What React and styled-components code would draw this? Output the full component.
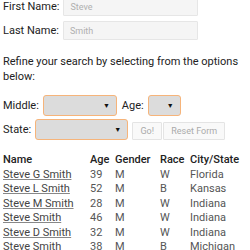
import React from 'react';
import styled, { createGlobalStyle } from 'styled-components';

const GlobalStyle = createGlobalStyle`
  html, body {
    margin: 0;
    padding: 0;
    background: #fff;
  }
  body {
    font-family: Roboto, "Liberation Sans", sans-serif;
    color: #222;
    overflow: hidden;
  }
`;

const Page = styled.div`
  padding: 0 3px;
  margin-top: -3px;
`;

const NameRow = styled.div`
  display: flex;
  align-items: center;
  gap: 4px;
  margin-bottom: 5px;
  font-size: 11px;
`;

const TextInput = styled.input`
  box-sizing: border-box;
  width: 135px;
  height: 19px;
  padding: 0 6px;
  border: 1px solid #e6e6e6;
  border-radius: 1px;
  background: #f5f5f5;
  font-family: Roboto, "Liberation Sans", sans-serif;
  font-size: 9px;
  outline: none;

  &::placeholder {
    color: #b0b0b0;
  }
`;

const Intro = styled.p`
  margin: 14px 0 11px;
  font-size: 11px;
  line-height: 15px;
`;

const FilterRow = styled.div`
  display: flex;
  align-items: center;
  gap: 4px;
  margin-bottom: 3px;
  font-size: 11px;
`;

const SelectBox = styled.div`
  box-sizing: border-box;
  width: ${p => p.$width}px;
  height: 21px;
  border: 1px solid #f6b47a;
  border-radius: 3px;
  background: #dcdcdc;
  display: flex;
  align-items: center;
  justify-content: flex-end;
  padding-right: 6px;
  font-size: 7px;
  color: #111;
  margin-right: ${p => p.$after || 0}px;
`;

const Button = styled.button`
  box-sizing: border-box;
  width: ${p => p.$w}px;
  height: 18px;
  margin-top: 3px;
  padding: 0;
  border: 1px solid #e4e4e4;
  background: #f9f9f9;
  color: #aaa;
  font-family: Roboto, "Liberation Sans", sans-serif;
  font-size: 9px;
  border-radius: 1px;
`;

const ButtonGroup = styled.div`
  display: flex;
  gap: 1px;
`;

const Table = styled.table`
  margin-top: 12px;
  border-collapse: collapse;
  font-size: 11px;
`;

const Th = styled.th`
  text-align: left;
  font-weight: 500;
  color: #222;
  padding: 0;
  height: 15px;
  width: ${p => p.$w}px;
`;

const Td = styled.td`
  padding: 0;
  height: 14.5px;
  color: #555;
`;

const NameLink = styled.a`
  color: #444;
  text-decoration: underline;
  text-decoration-color: #888;
`;

const Caret = () => <span>▼</span>;

const people = [
  ['Steve G Smith', 39, 'M', 'W', 'Florida'],
  ['Steve L Smith', 52, 'M', 'B', 'Kansas'],
  ['Steve M Smith', 28, 'M', 'W', 'Indiana'],
  ['Steve Smith', 46, 'M', 'W', 'Indiana'],
  ['Steve D Smith', 32, 'M', 'W', 'Indiana'],
  ['Steve Smith', 38, 'M', 'B', 'Michigan'],
];

export default function App() {
  return (
    <>
      <GlobalStyle />
      <Page>
        <NameRow>
          <span>First Name:</span>
          <TextInput placeholder="Steve" />
        </NameRow>
        <NameRow>
          <span>Last Name:</span>
          <TextInput placeholder="Smith" />
        </NameRow>
        <Intro>Refine your search by selecting from the options below:</Intro>
        <FilterRow>
          <span>Middle:</span>
          <SelectBox $width={74} $after={1}><Caret /></SelectBox>
          <span>Age:</span>
          <SelectBox $width={33}><Caret /></SelectBox>
        </FilterRow>
        <FilterRow>
          <span>State:</span>
          <SelectBox $width={93}><Caret /></SelectBox>
          <ButtonGroup>
            <Button $w={30}>Go!</Button>
            <Button $w={62}>Reset Form</Button>
          </ButtonGroup>
        </FilterRow>
        <Table>
          <thead>
            <tr>
              <Th $w={87}>Name</Th>
              <Th $w={25}>Age</Th>
              <Th $w={45}>Gender</Th>
              <Th $w={30}>Race</Th>
              <Th>City/State</Th>
            </tr>
          </thead>
          <tbody>
            {people.map((p, i) => (
              <tr key={i}>
                <Td><NameLink href="#">{p[0]}</NameLink></Td>
                <Td>{p[1]}</Td>
                <Td>{p[2]}</Td>
                <Td>{p[3]}</Td>
                <Td>{p[4]}</Td>
              </tr>
            ))}
          </tbody>
        </Table>
      </Page>
    </>
  );
}
